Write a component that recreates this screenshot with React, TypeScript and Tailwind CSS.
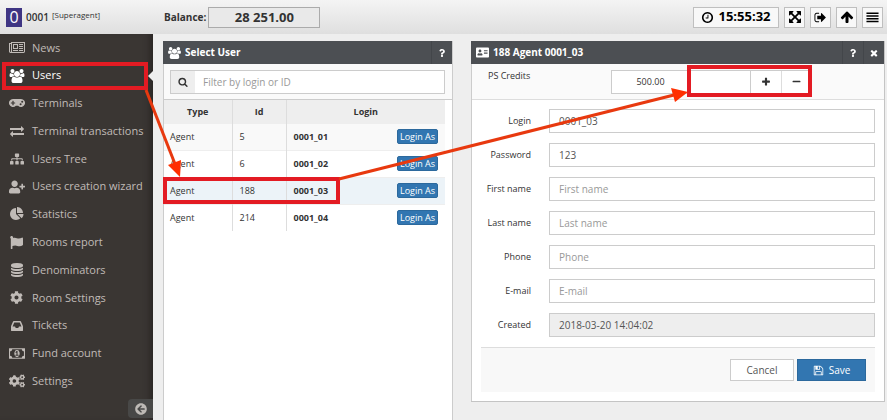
import type { ReactNode } from 'react'
import {
  FaAddressCard,
  FaArrowCircleLeft,
  FaCog,
  FaCogs,
  FaFlag,
  FaGamepad,
  FaMinus,
  FaQuestion,
  FaSitemap,
  FaUserPlus
} from 'react-icons/fa'

interface GlyphProps {
  d: string
  width?: number
  className?: string
}

// Glyphs share a 1792 unit em, wider ones pass their own width
const Glyph = ({ d, width = 1792, className = '' }: GlyphProps) => (
  <svg viewBox={`0 0 ${width} 1792`} className={`shrink-0 ${className}`} fill="currentColor" aria-hidden="true">
    <path d={d} />
  </svg>
)

const PATHS = {
  users:
    'M593 896q-162 5-265 128h-134q-82 0-138-40.5t-56-118.5q0-353 124-353 6 0 43.5 21t97.5 42.5 119 21.5q67 0 133-23-5 37-5 66 0 139 81 256zm1071 637q0 120-73 189.5t-194 69.5h-874q-121 0-194-69.5t-73-189.5q0-53 3.5-103.5t14-109 26.5-108.5 43-97.5 62-81 85.5-53.5 111.5-20q10 0 43 21.5t73 48 107 48 135 21.5 135-21.5 107-48 73-48 43-21.5q61 0 111.5 20t85.5 53.5 62 81 43 97.5 26.5 108.5 14 109 3.5 103.5zm-1024-1277q0 106-75 181t-181 75-181-75-75-181 75-181 181-75 181 75 75 181zm704 384q0 159-112.5 271.5t-271.5 112.5-271.5-112.5-112.5-271.5 112.5-271.5 271.5-112.5 271.5 112.5 112.5 271.5zm576 225q0 78-56 118.5t-138 40.5h-134q-103-123-265-128 81-117 81-256 0-29-5-66 66 23 133 23 59 0 119-21.5t97.5-42.5 43.5-21q124 0 124 353zm-128-609q0 106-75 181t-181 75-181-75-75-181 75-181 181-75 181 75 75 181z',
  news:
    'M1024 512h-384v384h384v-384zm128 640v128h-640v-128h640zm0-768v640h-640v-640h640zm640 768v128h-512v-128h512zm0-256v128h-512v-128h512zm0-256v128h-512v-128h512zm0-256v128h-512v-128h512zm-1536 960v-960h-128v960q0 26 19 45t45 19 45-19 19-45zm1664 0v-1088h-1536v1088q0 33-11 64h1483q26 0 45-19t19-45zm128-1216v1216q0 80-56 136t-136 56h-1664q-80 0-136-56t-56-136v-1088h256v-128h1792z',
  exchange:
    'M1792 1184v192q0 13-9.5 22.5t-22.5 9.5h-1376v192q0 13-9.5 22.5t-22.5 9.5q-12 0-24-10l-319-320q-9-9-9-22 0-14 9-23l320-320q9-9 23-9 13 0 22.5 9.5t9.5 22.5v192h1376q13 0 22.5 9.5t9.5 22.5zm0-544q0 14-9 23l-320 320q-9 9-23 9-13 0-22.5-9.5t-9.5-22.5v-192h-1376q-13 0-22.5-9.5t-9.5-22.5v-192q0-13 9.5-22.5t22.5-9.5h1376v-192q0-14 9-23t23-9q12 0 24 10l319 319q9 9 9 23z',
  pie:
    'M768 890l546 546q-106 108-247.5 168t-298.5 60q-209 0-385.5-103t-279.5-279.5-103-385.5 103-385.5 279.5-279.5 385.5-103v762zm187 6h773q0 157-60 298.5t-168 247.5zm709-128h-768v-768q209 0 385.5 103t279.5 279.5 103 385.5z',
  database:
    'M896 768q237 0 443-43t325-127v170q0 69-103 128t-280 93.5-385 34.5-385-34.5-280-93.5-103-128v-170q119 84 325 127t443 43zm0 768q237 0 443-43t325-127v170q0 69-103 128t-280 93.5-385 34.5-385-34.5-280-93.5-103-128v-170q119 84 325 127t443 43zm0-384q237 0 443-43t325-127v170q0 69-103 128t-280 93.5-385 34.5-385-34.5-280-93.5-103-128v-170q119 84 325 127t443 43zm0-1152q208 0 385 34.5t280 93.5 103 128v128q0 69-103 128t-280 93.5-385 34.5-385-34.5-280-93.5-103-128v-128q0-69 103-128t280-93.5 385-34.5z',
  inbox:
    'M1151 960h316q-1-3-2.5-8.5t-2.5-7.5l-212-496h-708l-212 496q-1 3-2.5 8.5t-2.5 7.5h316l95 192h320zm513 30v482q0 26-19 45t-45 19h-1408q-26 0-45-19t-19-45v-482q0-62 25-123l238-552q10-25 36.5-42t52.5-17h832q26 0 52.5 17t36.5 42l238 552q25 61 25 123z',
  money:
    'M768 1152h384v-96h-128v-448h-114l-148 137 77 80q42-37 55-57h2v288h-128v96zm512-256q0 70-21 142t-59.5 134-101.5 101-138 39-138-39-101.5-101-59.5-134-21-142 21-142 59.5-134 101.5-101 138-39 138 39 101.5 101 59.5 134 21 142zm512 256v-512q-106 0-181-75t-75-181h-1152q0 106-75 181t-181 75v512q106 0 181 75t75 181h1152q0-106 75-181t181-75zm128-832v1152q0 26-19 45t-45 19h-1792q-26 0-45-19t-19-45v-1152q0-26 19-45t45-19h1792q26 0 45 19t19 45z',
  clock:
    'M1024 544v448q0 14-9 23t-23 9h-320q-14 0-23-9t-9-23v-64q0-14 9-23t23-9h224v-352q0-14 9-23t23-9h64q14 0 23 9t9 23zm416 352q0-148-73-273t-198-198-273-73-273 73-198 198-73 273 73 273 198 198 273 73 273-73 198-198 73-273zm224 0q0 209-103 385.5t-279.5 279.5-385.5 103-385.5-103-279.5-279.5-103-385.5 103-385.5 279.5-279.5 385.5-103 385.5 103 279.5 279.5 103 385.5z',
  expand:
    'M1411 541l-355 355 355 355 144-144q29-31 70-14 39 17 39 59v448q0 26-19 45t-45 19h-448q-42 0-59-40-17-39 14-69l144-144-355-355-355 355 144 144q31 30 14 69-17 40-59 40h-448q-26 0-45-19t-19-45v-448q0-42 40-59 39-17 69 14l144 144 355-355-355-355-144 144q-19 19-45 19-12 0-24-5-40-17-40-59v-448q0-26 19-45t45-19h448q42 0 59 40 17 39-14 69l-144 144 355 355 355-355-144-144q-31-30-14-69 17-40 59-40h448q26 0 45 19t19 45v448q0 42-39 59-13 5-25 5-26 0-45-19z',
  signOut:
    'M704 1440q0 4 1 20t.5 26.5-3 23.5-10 19.5-20.5 6.5h-320q-119 0-203.5-84.5t-84.5-203.5v-704q0-119 84.5-203.5t203.5-84.5h320q13 0 22.5 9.5t9.5 22.5q0 4 1 20t.5 26.5-3 23.5-10 19.5-20.5 6.5h-320q-66 0-113 47t-47 113v704q0 66 47 113t113 47h312l11.5 1 11.5 3 8 5.5 7 9 2 13.5zm928-544q0 26-19 45l-544 544q-19 19-45 19t-45-19-19-45v-288h-448q-26 0-45-19t-19-45v-384q0-26 19-45t45-19h448v-288q0-26 19-45t45-19 45 19l544 544q19 19 19 45z',
  arrowUp:
    'M1675 971q0 51-37 90l-75 75q-38 38-91 38-54 0-90-38l-294-293v704q0 52-37.5 84.5t-90.5 32.5h-128q-53 0-90.5-32.5t-37.5-84.5v-704l-294 293q-36 38-90 38t-90-38l-75-75q-38-38-38-90 0-53 38-91l651-651q35-37 90-37 54 0 91 37l651 651q37 39 37 91z',
  bars:
    'M64 192h1664v208h-1664zM64 576h1664v208h-1664zM64 960h1664v208h-1664zM64 1344h1664v208h-1664z',
  search:
    'M1216 832q0-185-131.5-316.5t-316.5-131.5-316.5 131.5-131.5 316.5 131.5 316.5 316.5 131.5 316.5-131.5 131.5-316.5zm512 832q0 52-38 90t-90 38q-54 0-90-38l-343-342q-179 124-399 124-143 0-273.5-55.5t-225-150-150-225-55.5-273.5 55.5-273.5 150-225 225-150 273.5-55.5 273.5 55.5 225 150 150 225 55.5 273.5q0 220-124 399l343 343q37 37 37 90z',
  times:
    'M1490 1322q0 40-28 68l-136 136q-28 28-68 28t-68-28l-294-294-294 294q-28 28-68 28t-68-28l-136-136q-28-28-28-68t28-68l294-294-294-294q-28-28-28-68t28-68l136-136q28-28 68-28t68 28l294 294 294-294q28-28 68-28t68 28l136 136q28 28 28 68t-28 68l-294 294 294 294q28 28 28 68z',
  plus:
    'M1600 736v192q0 40-28 68t-68 28h-416v416q0 40-28 68t-68 28h-192q-40 0-68-28t-28-68v-416h-416q-40 0-68-28t-28-68v-192q0-40 28-68t68-28h416v-416q0-40 28-68t68-28h192q40 0 68 28t28 68v416h416q40 0 68 28t28 68z',
  save:
    'M512 1536h768v-384h-768v384zm896 0h128v-896q0-14-10-38.5t-20-34.5l-281-281q-10-10-34-20t-39-10v416q0 40-28 68t-68 28h-576q-40 0-68-28t-28-68v-416h-128v1280h128v-416q0-40 28-68t68-28h832q40 0 68 28t28 68v416zm-384-928v-320q0-13-9.5-22.5t-22.5-9.5h-192q-13 0-22.5 9.5t-9.5 22.5v320q0 13 9.5 22.5t22.5 9.5h192q13 0 22.5-9.5t9.5-22.5zm640 32v928q0 40-28 68t-68 28h-1344q-40 0-68-28t-28-68v-1344q0-40 28-68t68-28h928q40 0 88 20t76 48l280 280q28 28 48 76t20 88z'
}

const NAV_ITEMS: { label: string; icon: ReactNode }[] = [
  { label: 'News', icon: <Glyph d={PATHS.news} width={2048} className="h-[14px] w-4" /> },
  { label: 'Users', icon: <Glyph d={PATHS.users} width={1920} className="h-[14px] w-4" /> },
  { label: 'Terminals', icon: <FaGamepad size={16} /> },
  { label: 'Terminal transactions', icon: <Glyph d={PATHS.exchange} className="h-[14px] w-[14px]" /> },
  { label: 'Users Tree', icon: <FaSitemap size={14} /> },
  { label: 'Users creation wizard', icon: <FaUserPlus size={16} /> },
  { label: 'Statistics', icon: <Glyph d={PATHS.pie} className="h-[14px] w-[14px]" /> },
  { label: 'Rooms report', icon: <FaFlag size={13} /> },
  { label: 'Denominators', icon: <Glyph d={PATHS.database} className="h-[14px] w-[14px]" /> },
  { label: 'Room Settings', icon: <FaCog size={13} /> },
  { label: 'Tickets', icon: <Glyph d={PATHS.inbox} className="h-[14px] w-[14px]" /> },
  { label: 'Fund account', icon: <Glyph d={PATHS.money} width={1920} className="h-[15px] w-4" /> },
  { label: 'Settings', icon: <FaCogs size={16} /> }
]

const USERS = [
  { type: 'Agent', id: 5, login: '0001_01' },
  { type: 'Agent', id: 6, login: '0001_02' },
  { type: 'Agent', id: 188, login: '0001_03' },
  { type: 'Agent', id: 214, login: '0001_04' }
]

const FIELDS = [
  { id: 'login', label: 'Login', value: '0001_03' },
  { id: 'password', label: 'Password', value: '123' },
  { id: 'first-name', label: 'First name' },
  { id: 'last-name', label: 'Last name' },
  { id: 'phone', label: 'Phone' },
  { id: 'email', label: 'E-mail' },
  { id: 'created', label: 'Created', value: '2018-03-20 14:04:02', disabled: true }
]

const HeaderButton = ({ label, children }: { label: string; children: ReactNode }) => (
  <button
    type="button"
    aria-label={label}
    className="flex h-[21px] w-[21px] items-center justify-center border border-[#bfbfbf] bg-[#f8f8f8] text-black"
  >
    {children}
  </button>
)

const Header = () => (
  <header className="flex h-[34px] items-center bg-linear-to-b from-[#f4f4f4] to-[#dfdfdf] pr-1">
    <div className="flex w-[153px] shrink-0 items-center pl-[6px]">
      <span className="flex h-[19px] w-4 items-center justify-center bg-[#3f3583] text-base text-white">0</span>
      <span className="ml-1 text-[10px] font-semibold">0001</span>
      <span className="mb-1 ml-[3px] text-[8px]">[Superagent]</span>
    </div>
    <span className="ml-[11px] text-[10px] font-bold">Balance:</span>
    <button
      type="button"
      className="ml-[2px] h-[21px] w-[112px] border border-[#ababab] bg-[#e9e9e9] text-[13px] leading-[19px] font-bold"
    >
      28 251.00
    </button>

    <div className="ml-auto flex gap-[5px]">
      <div className="flex h-[21px] w-[86px] items-center justify-center gap-1 border border-[#bfbfbf] bg-[#f8f8f8] text-[13px] font-bold text-black">
        <Glyph d={PATHS.clock} className="h-[13px] w-[13px]" />
        15:55:32
      </div>
      <HeaderButton label="Full screen">
        <Glyph d={PATHS.expand} className="h-[14px] w-[14px]" />
      </HeaderButton>
      <HeaderButton label="Sign out">
        <Glyph d={PATHS.signOut} className="h-[13px] w-[13px]" />
      </HeaderButton>
      <HeaderButton label="Scroll to top">
        <Glyph d={PATHS.arrowUp} className="h-[14px] w-[14px]" />
      </HeaderButton>
      <HeaderButton label="Toggle menu">
        <Glyph d={PATHS.bars} className="h-[13px] w-[13px]" />
      </HeaderButton>
    </div>
  </header>
)

const Sidebar = () => (
  <aside className="flex w-[153px] shrink-0 flex-col bg-[#3a3633] shadow-[inset_-7px_0_6px_-4px_#292624]">
    <nav className="grid h-[361px] auto-rows-fr">
      {NAV_ITEMS.map(({ label, icon }) => {
        const active = label === 'Users'
        return (
          <a
            key={label}
            href="#"
            className={`relative flex items-center gap-[7px] pl-2 text-[11px] whitespace-nowrap ${active ? 'text-white' : 'text-[#c0bbb7]'}`}
          >
            <span className="flex w-[17px] justify-center">{icon}</span>
            {label}
            {active && (
              <span className="absolute right-0 h-0 w-0 border-y-[5px] border-r-[5px] border-y-transparent border-r-[#eee]" />
            )}
          </a>
        )
      })}
    </nav>
    <button
      type="button"
      aria-label="Collapse menu"
      className="mt-1 flex h-[19px] w-[25px] items-center justify-center self-end rounded-l bg-[#484847] text-[#bdb9b5]"
    >
      <FaArrowCircleLeft size={12} />
    </button>
  </aside>
)

const PanelHeader = ({ icon, title, closable }: { icon: ReactNode; title: string; closable?: boolean }) => (
  <header className="flex h-[23px] items-center bg-[#4c4f53] pl-[5px] text-white">
    {icon}
    <h2 className="ml-1 flex-1 text-[10px] font-bold">{title}</h2>
    <button
      type="button"
      aria-label="Help"
      className="flex h-full w-[21px] items-center justify-center border-l border-[#43464a]"
    >
      <FaQuestion size={8} />
    </button>
    {closable && (
      <button
        type="button"
        aria-label="Close"
        className="flex h-full w-[21px] items-center justify-center border-l border-[#43464a]"
      >
        <Glyph d={PATHS.times} className="h-[10px] w-[10px]" />
      </button>
    )}
  </header>
)

const SelectUserPanel = () => (
  <section className="flex flex-col border-r border-[#ccc] bg-white">
    <PanelHeader
      icon={<Glyph d={PATHS.users} width={1920} className="h-3 w-[13px]" />}
      title="Select User"
    />
    <div className="flex h-9 items-center border-b border-l border-[#ccc] bg-[#fafafa] pr-[7px] pl-[6px]">
      <label
        htmlFor="filter"
        className="flex h-6 w-[25px] items-center justify-center border border-r-0 border-[#ccc] bg-[#eee] text-[#333]"
      >
        <Glyph d={PATHS.search} className="h-[10px] w-[10px]" />
      </label>
      <input
        id="filter"
        aria-label="Filter by login or ID"
        placeholder="Filter by login or ID"
        className="h-6 min-w-0 flex-1 border border-l-0 border-[#ccc] bg-white px-2 text-[10px] placeholder:text-[#999]"
      />
    </div>
    <div className="flex-1 border-l border-[#ccc] pr-[7px]">
      <table className="w-full table-fixed text-[9px]">
        <thead>
          <tr className="h-[23px] bg-[#eee]">
            <th className="w-[68px] border-r border-[#ddd] font-bold">Type</th>
            <th className="w-[54px] border-r border-[#ddd] font-bold">Id</th>
            <th className="font-bold">Login</th>
          </tr>
        </thead>
        <tbody>
          {USERS.map(user => (
            <tr
              key={user.id}
              className={`h-[27px] ${user.id === 188 ? 'bg-[#ecf3f8]' : user.id === 5 ? 'bg-[#f9f9f9]' : ''}`}
            >
              <td className="border-t border-r border-[#ddd] border-t-[#eee] py-0 pl-[6px]">{user.type}</td>
              <td className="border-t border-r border-[#ddd] border-t-[#eee] py-0 pl-[7px]">{user.id}</td>
              <td className="border-t border-[#eee] px-[7px] py-0 font-bold">
                <div className="flex items-center justify-between">
                  {user.login}
                  <button
                    type="button"
                    className="h-[15px] w-[41px] rounded-xs border border-[#2c699d] bg-[#3276b1] leading-[13px] font-normal text-white"
                  >
                    Login As
                  </button>
                </div>
              </td>
            </tr>
          ))}
        </tbody>
      </table>
    </div>
  </section>
)

const AgentPanel = () => (
  <section className="self-start border-r border-b border-[#c4c4c4] bg-white">
    <PanelHeader icon={<FaAddressCard size={13} />} title="188 Agent 0001_03" closable />
    <form className="border-l border-[#ccc]">
      <div className="flex h-9 items-center border-b border-[#ddd] bg-[#fafafa]">
        <label htmlFor="credits" className="mb-3 w-[139px] pl-4 text-[9px]">
          PS Credits
        </label>
        <div className="flex h-6 border border-[#ccc] bg-white">
          <output className="w-[77px] text-center text-[9px] leading-[22px]">500.00</output>
          <input id="credits" className="w-[62px] border-x border-[#ccc] px-2 text-[9px]" />
          <button type="button" aria-label="Add" className="flex w-[30px] items-center justify-center">
            <Glyph d={PATHS.plus} className="h-[10px] w-[10px]" />
          </button>
          <button
            type="button"
            aria-label="Subtract"
            className="flex w-[30px] items-center justify-center border-l border-[#ddd]"
          >
            <FaMinus size={9} />
          </button>
        </div>
      </div>

      <div className="px-[9px] pt-[9px] pb-[9px]">
        <div className="grid gap-[10px]">
          {FIELDS.map(({ id, label, value, disabled }) => (
            <div key={id} className="flex items-center">
              <label htmlFor={id} className="w-[50px] shrink-0 text-right text-[9px] whitespace-nowrap">
                {label}
              </label>
              <input
                id={id}
                defaultValue={value}
                placeholder={label}
                disabled={disabled}
                className="ml-[18px] h-6 min-w-0 flex-1 border border-[#ccc] bg-white px-[9px] text-[10px] text-[#555] placeholder:text-[#999] disabled:bg-[#eee]"
              />
            </div>
          ))}
        </div>
        <footer className="mt-[10px] flex h-[45px] items-center justify-end gap-[3px] border-t border-[#ddd] bg-[#f8f8f8] pr-[9px]">
          <button type="button" className="h-[22px] w-16 border border-[#ccc] bg-white text-[10px] text-[#555]">
            Cancel
          </button>
          <button
            type="submit"
            className="flex h-[22px] w-[69px] items-center justify-center gap-[5px] border border-[#2c699d] bg-[#3276b1] text-[10px] text-white"
          >
            <Glyph d={PATHS.save} className="h-[11px] w-[11px]" />
            Save
          </button>
        </footer>
      </div>
    </form>
  </section>
)

/* Walkthrough marks drawn over the page */
const Annotations = () => (
  <svg width="887" height="420" className="pointer-events-none absolute top-0 left-0" aria-hidden="true">
    <g fill="none" stroke="#e31b23" strokeWidth="4">
      <rect x="4" y="64" width="142" height="24" />
      <rect x="165" y="179" width="173" height="23" />
      <rect x="689" y="67" width="121" height="28" />
    </g>
    <g stroke="#e8390f" strokeWidth="3">
      <path d="M146 90L175 164" />
      <path d="M339 179L674 95" />
    </g>
    <path d="M180 177L168 165L181 160Z" fill="#ff2f00" />
    <path d="M688 92L675 102L671 88Z" fill="#ff2f00" />
  </svg>
)

export default function App() {
  return (
    <div className="relative flex min-h-screen flex-col bg-[#eee] font-['Open_Sans',sans-serif] text-[#333]">
      <Header />
      <div className="flex flex-1">
        <Sidebar />
        <main className="grid flex-1 grid-cols-[290fr_414fr] gap-[18px] pt-[7px] pr-[2px] pl-[10px]">
          <SelectUserPanel />
          <AgentPanel />
        </main>
      </div>
      <Annotations />
    </div>
  )
}
